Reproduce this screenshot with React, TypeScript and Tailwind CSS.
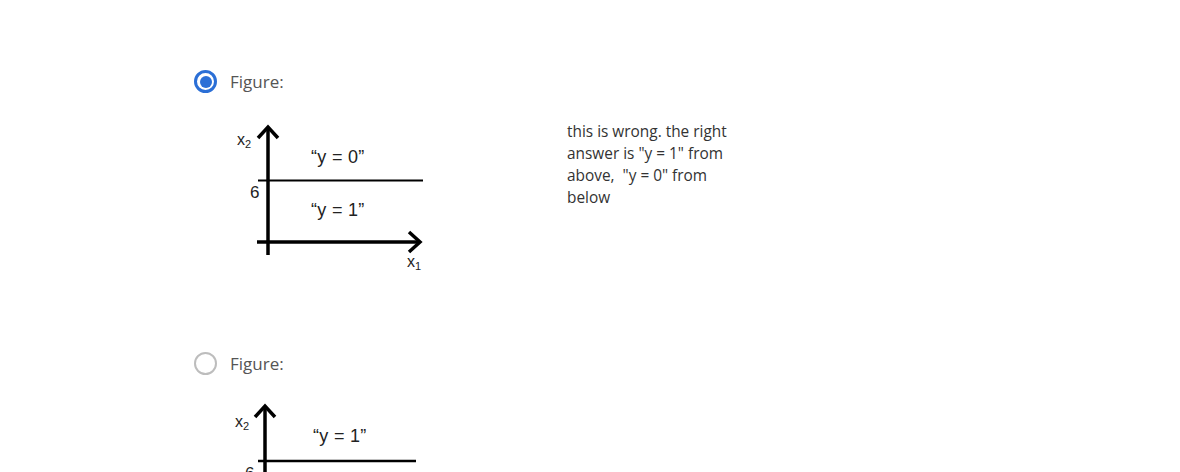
import React from "react";

const figFont = "'Liberation Sans', 'Open Sans', sans-serif";

function Radio({ checked }: { checked?: boolean }) {
  return checked ? (
    <span className="flex h-[23px] w-[23px] shrink-0 items-center justify-center rounded-full border-[3px] border-[#2b6fd6] bg-white">
      <span className="h-[12px] w-[12px] rounded-full bg-[#2b6fd6]" />
    </span>
  ) : (
    <span className="h-[23px] w-[23px] shrink-0 rounded-full border-2 border-[#bdbdbd] bg-white" />
  );
}

function FigureOne() {
  return (
    <svg width="200" height="165" viewBox="0 0 200 165" fontFamily={figFont} fill="#000">
      <line x1="38" y1="12" x2="38" y2="140" stroke="#000" strokeWidth="3.5" />
      <polyline points="28,23 38,12 48,23" fill="none" stroke="#000" strokeWidth="3.5" />
      <line x1="28" y1="65.5" x2="193" y2="65.5" stroke="#000" strokeWidth="2" />
      <line x1="27" y1="127" x2="190" y2="127" stroke="#000" strokeWidth="3.5" />
      <polyline points="179,117 190,127 179,137" fill="none" stroke="#000" strokeWidth="3.5" />
      <text x="7" y="30" fontSize="16" fill="#222">
        x<tspan fontSize="11" dy="3">2</tspan>
      </text>
      <text x="20" y="83" fontSize="17" fill="#222">6</text>
      <text x="81" y="48" fontSize="18" fill="#222" letterSpacing="0.3">“y = 0”</text>
      <text x="81" y="101" fontSize="18" fill="#222" letterSpacing="0.3">“y = 1”</text>
      <text x="177" y="152" fontSize="16" fill="#222">
        x<tspan fontSize="11" dy="3">1</tspan>
      </text>
    </svg>
  );
}

function FigureTwo() {
  return (
    <svg width="200" height="77" viewBox="0 0 200 77" fontFamily={figFont} fill="#000">
      <line x1="35" y1="11" x2="35" y2="77" stroke="#000" strokeWidth="3.5" />
      <polyline points="25,22 35,11 45,22" fill="none" stroke="#000" strokeWidth="3.5" />
      <line x1="28" y1="66" x2="186" y2="66" stroke="#000" strokeWidth="2.5" />
      <text x="5" y="32" fontSize="16" fill="#222">
        x<tspan fontSize="11" dy="3">2</tspan>
      </text>
      <text x="83" y="47" fontSize="18" fill="#222" letterSpacing="0.3">“y = 1”</text>
      <text x="15" y="84" fontSize="17" fill="#222">6</text>
    </svg>
  );
}

export default function App() {
  return (
    <div className="min-h-[472px] w-full overflow-hidden bg-white pl-[194px] pt-[70px] font-['Open_Sans',sans-serif]">
      <div className="flex flex-col">
        <label className="flex items-center gap-[13px]">
          <Radio checked />
          <span className="text-[17px] leading-[23px] text-[#555]">Figure:</span>
        </label>
        <div className="ml-[36px] mt-[22px] flex">
          <FigureOne />
          <p className="ml-[137px] mt-[6px] w-[170px] text-[15.4px] leading-[22px] text-[#333]">
            this is wrong. the right answer is "y = 1" from above,&nbsp; "y = 0" from below
          </p>
        </div>

        <label className="mt-[72px] flex items-center gap-[13px]">
          <Radio />
          <span className="text-[17px] leading-[23px] text-[#555]">Figure:</span>
        </label>
        <div className="ml-[36px] mt-[20px] flex">
          <FigureTwo />
        </div>
      </div>
    </div>
  );
}
